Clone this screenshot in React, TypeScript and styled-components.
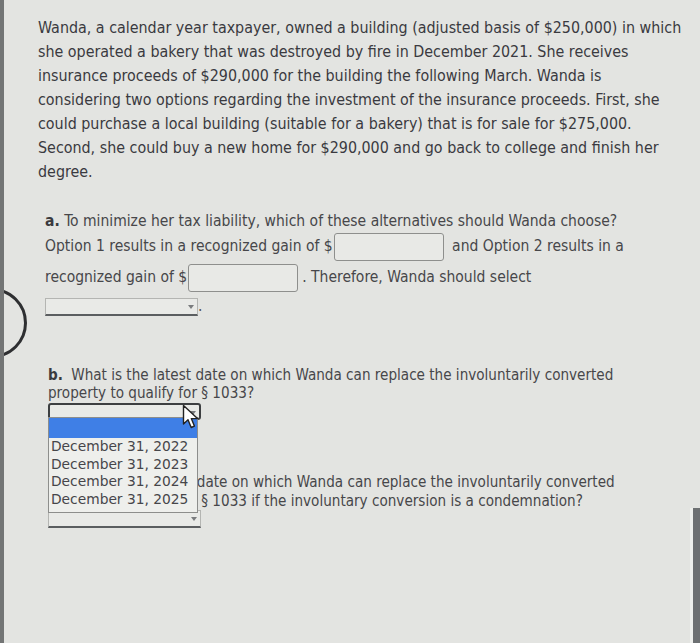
import React from "react";
import styled, { createGlobalStyle } from "styled-components";

const GlobalStyle = createGlobalStyle`
  html, body { margin: 0; padding: 0; background: #e3e4e1; }
  body { font-family: "DejaVu Sans Condensed", "DejaVu Sans", sans-serif; font-stretch: condensed; }
`;

const Page = styled.div`
  position: relative;
  display: flex;
  width: 700px;
  height: 643px;
  box-sizing: border-box;
  overflow: hidden;
  background: #e3e4e1;
  border-left: 4px solid #737575;
`;

const Content = styled.main`
  flex: 1;
  padding: 16px 5px 0 34px;
  color: #3c3c41;
`;

const Edge = styled.div`
  width: 10px;
  background:
    linear-gradient(to bottom, #e3e4e1 0 79%, transparent 79%),
    linear-gradient(to right, #eeefec 0 3px, #6d7072 3px);
`;

const Intro = styled.p`
  margin: 0;
  font-size: 15.9px;
  line-height: 24px;
  color: #3a3a40;
`;

const Question = styled.section<{ $top: number; $indent: number; $size: number; $lh: number }>`
  position: relative;
  margin-top: ${(p) => p.$top}px;
  padding-left: ${(p) => p.$indent}px;
  width: 604px;
  font-size: ${(p) => p.$size}px;
  line-height: ${(p) => p.$lh}px;
  color: #47474a;
`;

const Letter = styled.b<{ $gap?: number }>`
  color: #3a3a3e;
  margin-right: ${(p) => p.$gap ?? 0}px;
`;

const AnswerText = styled.div`
  line-height: 31px;
`;

const AmountInput = styled.span`
  display: inline-block;
  width: 108px;
  height: 26px;
  margin: 0 4px 0 1px;
  border: 1px solid #8e8f8d;
  border-radius: 3px;
  background: #e8e9e6;
  vertical-align: middle;
`;

const Select = styled.span<{ $focused?: boolean }>`
  position: relative;
  display: inline-block;
  box-sizing: border-box;
  width: 153px;
  height: ${(p) => (p.$focused ? 17 : 18)}px;
  background: #e9eae7;
  border: ${(p) => (p.$focused ? "2px solid #3d3f41" : "1px solid #b4b5b2")};
  border-radius: ${(p) => (p.$focused ? "3px" : "0")};
  ${(p) => (p.$focused ? "" : "border-bottom: 2px solid #5b5e60;")}
  vertical-align: middle;
  &::after {
    content: "";
    position: absolute;
    right: 3px;
    top: 6px;
    border: 3px solid transparent;
    border-top: 4px solid #7a7c7e;
  }
`;

const SelectRow = styled.div<{ $top: number }>`
  margin-top: ${(p) => p.$top}px;
  line-height: 18px;
  height: 18px;
`;

const Period = styled.span`
  color: #555;
`;

const DropList = styled.ul`
  position: absolute;
  z-index: 2;
  left: 0;
  top: 15px;
  width: 148px;
  margin: 0;
  padding: 0 0 4px;
  list-style: none;
  background: #eeefec;
  border: 1px solid #8d8e8c;
  font-family: "DejaVu Sans", sans-serif;
  font-stretch: normal;
  font-size: 13.8px;
  line-height: 17.6px;
  color: #46464a;
  overflow: hidden;
`;

const Option = styled.li<{ $active?: boolean }>`
  height: ${(p) => (p.$active ? 20 : 17.6)}px;
  padding-left: 2px;
  white-space: nowrap;
  background: ${(p) => (p.$active ? "#3f7fe6" : "transparent")};
`;

const SelectAnchor = styled.div`
  position: relative;
  width: 153px;
  height: 17px;
  margin-top: 0;
`;

const Cursor = styled.svg`
  position: absolute;
  z-index: 3;
  left: 134px;
  top: 2px;
  width: 18px;
  height: 26px;
`;

const Ring = styled.div`
  position: absolute;
  left: -47px;
  top: 288px;
  width: 64px;
  height: 64px;
  border: 3px solid #2e2f31;
  border-radius: 50%;
`;

const options = ["December 31, 2022", "December 31, 2023", "December 31, 2024", "December 31, 2025"];

export default function App() {
  return (
    <Page>
      <GlobalStyle />
      <Content>
        <Intro>
          Wanda, a calendar year taxpayer, owned a building (adjusted basis of $250,000) in which she
          operated a bakery that was destroyed by fire in December 2021. She receives insurance proceeds
          of $290,000 for the building the following March. Wanda is considering two options regarding the
          investment of the insurance proceeds. First, she could purchase a local building (suitable for a
          bakery) that is for sale for $275,000. Second, she could buy a new home for $290,000 and go back
          to college and finish her degree.
        </Intro>

        <Question $top={28} $indent={7} $size={15.5} $lh={19}>
          <div>
            <Letter>a.</Letter> To minimize her tax liability, which of these alternatives should Wanda choose?
          </div>
          <AnswerText>
            Option 1 results in a recognized gain of $<AmountInput /> and Option 2 results in a recognized
            gain of $<AmountInput />. Therefore, Wanda should select
          </AnswerText>
          <SelectRow $top={4}>
            <Select />
            <Period>.</Period>
          </SelectRow>
        </Question>

        <Question $top={51} $indent={10} $size={15.1} $lh={18}>
          <div>
            <Letter $gap={4}>b.</Letter> What is the latest date on which Wanda can replace the involuntarily
            converted property to qualify for § 1033?
          </div>
          <SelectAnchor>
            <Select $focused />
            <DropList>
              <Option $active />
              {options.map((o) => (
                <Option key={o}>{o}</Option>
              ))}
            </DropList>
            <Cursor viewBox="0 0 18 26">
              <path
                d="M1.5 1.5 L1.5 20 L6 15.8 L9.2 23.5 L12.4 22.1 L9.3 14.6 L15.5 14.6 Z"
                fill="#ffffff"
                stroke="#222"
                strokeWidth="1.4"
                strokeLinejoin="round"
              />
            </Cursor>
          </SelectAnchor>
        </Question>

        <Question $top={54} $indent={10} $size={15.1} $lh={19}>
          <div>
            <Letter $gap={7}>c.</Letter> What is the latest date on which Wanda can replace the involuntarily
            converted property to qualify for § 1033 if the involuntary conversion is a condemnation?
          </div>
          <SelectRow $top={-2}>
            <Select />
          </SelectRow>
        </Question>
      </Content>
      <Edge />
      <Ring />
    </Page>
  );
}
